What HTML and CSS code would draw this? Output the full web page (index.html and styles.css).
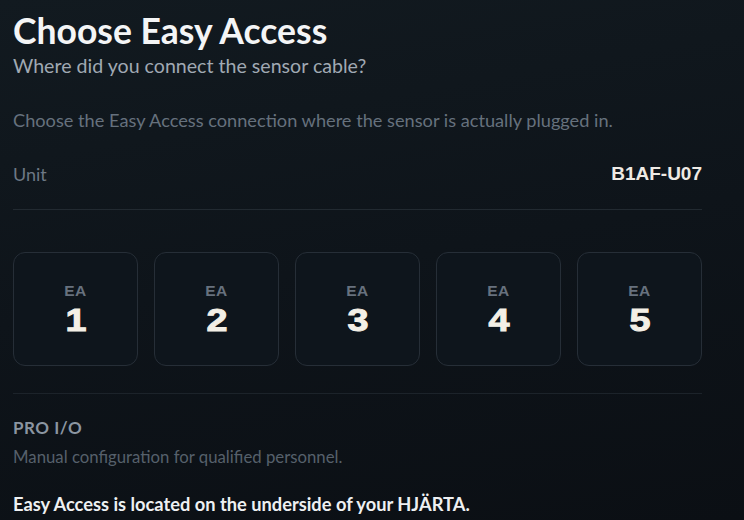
FILE: index.html
```html
<!DOCTYPE html>
<html lang="en">
<head>
<meta charset="utf-8">
<title>Choose Easy Access</title>
<link rel="stylesheet" href="styles.css">
</head>
<body>
<main class="page">
  <header class="head">
    <h1 class="title">Choose Easy Access</h1>
    <p class="subtitle">Where did you connect the sensor cable?</p>
  </header>
  <p class="desc">Choose the Easy Access connection where the sensor is actually plugged in.</p>
  <div class="unit-row">
    <span class="unit-label">Unit</span>
    <span class="unit-value">B1AF-U07</span>
  </div>
  <div class="cards">
    <button class="card"><span class="card-ea">EA</span><span class="card-num">1</span></button>
    <button class="card"><span class="card-ea">EA</span><span class="card-num">2</span></button>
    <button class="card"><span class="card-ea">EA</span><span class="card-num">3</span></button>
    <button class="card"><span class="card-ea">EA</span><span class="card-num">4</span></button>
    <button class="card"><span class="card-ea">EA</span><span class="card-num">5</span></button>
  </div>
  <section class="pro">
    <h2 class="pro-title">PRO I/O</h2>
    <p class="pro-desc">Manual configuration for qualified personnel.</p>
  </section>
  <p class="note">Easy Access is located on the underside of your HJÄRTA.</p>
</main>
</body>
</html>
```
FILE: styles.css
```css
html, body {
  margin: 0;
  height: 100%;
}
body {
  background: linear-gradient(170deg, #121a20 0%, #0e141a 50%, #0b0f14 100%);
  font-family: Lato, "Open Sans", sans-serif;
  color: #e8eaec;
  overflow: hidden;
}
.page {
  width: 689px;
  padding: 10px 0 0 13px;
}
.head { margin: 0; }
.title {
  margin: 0;
  font-size: 35.5px;
  font-weight: 700;
  line-height: 42px;
  color: #f4f5f6;
}
.subtitle {
  margin: 2px 0 0;
  font-size: 19.6px;
  line-height: 24px;
  color: #a0a9b3;
}
.desc {
  margin: 31px 0 0;
  font-size: 18.2px;
  line-height: 22px;
  color: #66717d;
}
.unit-row {
  margin-top: 32px;
  display: flex;
  justify-content: space-between;
  align-items: center;
  height: 22px;
  padding-bottom: 24px;
  border-bottom: 1px solid #222a31;
}
.unit-label {
  font-size: 18px;
  line-height: 22px;
  color: #6d7884;
}
.unit-value {
  font-family: "Liberation Sans", Arial, sans-serif;
  font-weight: 700;
  font-size: 19px;
  line-height: 22px;
  color: #eeeae4;
}
.cards {
  margin-top: 42px;
  display: grid;
  grid-template-columns: repeat(5, 1fr);
  gap: 16px;
  padding-bottom: 27px;
  border-bottom: 1px solid #1c232a;
}
.card {
  box-sizing: border-box;
  height: 114px;
  border: 1px solid #262e37;
  border-radius: 12px;
  background: #0e151c;
  display: flex;
  flex-direction: column;
  align-items: center;
  padding: 29.5px 0 0;
  font-family: "Liberation Sans", Arial, sans-serif;
  font-weight: 700;
  cursor: pointer;
}
.card-ea {
  font-size: 15.5px;
  color: #67717e;
  letter-spacing: 0.6px;
  line-height: 16px;
}
.card-num {
  margin-top: 5px;
  font-size: 32px;
  line-height: 32px;
  color: #f3efe6;
  -webkit-text-stroke: 1px #f3efe6;
  transform: scaleX(1.18);
}
.pro { margin-top: 24px; }
.pro-title {
  margin: 0;
  font-size: 17px;
  font-weight: 700;
  line-height: 20px;
  letter-spacing: 0.5px;
  color: #8b95a1;
}
.pro-desc {
  margin: 9px 0 0;
  font-size: 16.75px;
  line-height: 20px;
  color: #56606b;
}
.note {
  margin: 26px 0 0;
  font-size: 18.25px;
  font-weight: 700;
  line-height: 22px;
  color: #eef0f2;
}
```
